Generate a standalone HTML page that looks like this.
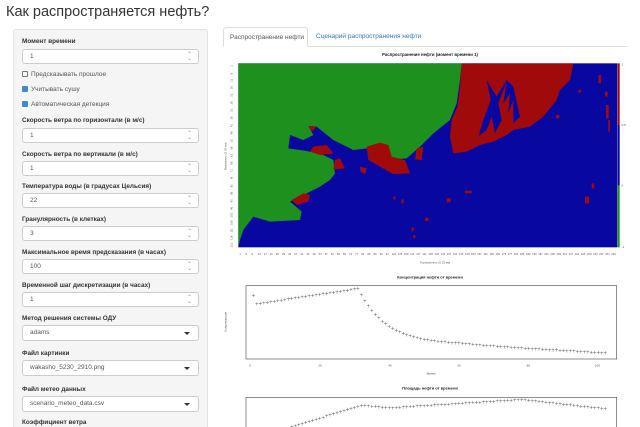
<!DOCTYPE html>
<html><head><meta charset="utf-8">
<style>
*{box-sizing:border-box;margin:0;padding:0}
html,body{width:640px;height:427px;overflow:hidden}
body{background:#fff;font-family:"Liberation Sans",sans-serif;color:#333;position:relative}
h1{position:absolute;left:6px;top:4px;font-size:14.5px;font-weight:normal;color:#333;white-space:nowrap}
.side{position:absolute;left:13px;top:29px;width:195px;height:398px;background:#f5f5f5;border:1px solid #e3e3e3;border-bottom:none;border-radius:3px 3px 0 0}
.lb{position:absolute;left:22px;font-size:6.4px;font-weight:bold;color:#333;white-space:nowrap}
.in{position:absolute;left:22px;width:177px;height:15px;background:#fff;border:1px solid #ccc;border-radius:3px;font-size:6.5px;color:#555;padding:3px 7px}
.in .sp{position:absolute;right:6px;top:3px;font-size:6px;color:#999;line-height:4px}
.in .ar{position:absolute;right:8px;top:6px;width:0;height:0;border-left:3px solid transparent;border-right:3px solid transparent;border-top:3px solid #333}
.cb{position:absolute;left:22px;font-size:6.5px;color:#555;white-space:nowrap}
.cb i{display:inline-block;width:6px;height:6px;border:1px solid #777;vertical-align:-1px;margin-right:3px;border-radius:1px}
.cb i.on{background:#3c8dcf;border-color:#3c8dcf}
.tab1{position:absolute;left:223px;top:27px;width:85px;height:20px;border:1px solid #ddd;border-bottom-color:#fff;border-radius:3px 3px 0 0;font-size:6.5px;padding:6px 6px;background:#fff;color:#555;white-space:nowrap}
.tab2{position:absolute;left:316px;top:33px;font-size:6.5px;color:#337ab7;white-space:nowrap}
.tl{position:absolute;left:307px;top:46px;width:320px;border-top:1px solid #ddd}
svg{position:absolute;overflow:hidden}
</style></head><body>
<h1>Как распространяется нефть?</h1>
<div class="side"></div>
<div class="lb" style="top:38px">Момент времени</div>
<div class="in" style="top:49px">1<span class="sp">⌃<br>⌄</span></div>
<div class="cb" style="top:71px"><i></i>Предсказывать прошлое</div>
<div class="cb" style="top:86px"><i class="on"></i>Учитывать сушу</div>
<div class="cb" style="top:101px"><i class="on"></i>Автоматическая детекция</div>
<div class="lb" style="top:117px">Скорость ветра по горизонтали (в м/с)</div>
<div class="in" style="top:128px">1<span class="sp">⌃<br>⌄</span></div>
<div class="lb" style="top:151px">Скорость ветра по вертикали (в м/с)</div>
<div class="in" style="top:161px">1<span class="sp">⌃<br>⌄</span></div>
<div class="lb" style="top:183px">Температура воды (в градусах Цельсия)</div>
<div class="in" style="top:193px">22<span class="sp">⌃<br>⌄</span></div>
<div class="lb" style="top:216px">Гранулярность (в клетках)</div>
<div class="in" style="top:226px">3<span class="sp">⌃<br>⌄</span></div>
<div class="lb" style="top:249px">Максимальное время предсказания (в часах)</div>
<div class="in" style="top:259px">100<span class="sp">⌃<br>⌄</span></div>
<div class="lb" style="top:282px">Временной шаг дискретизации (в часах)</div>
<div class="in" style="top:292px">1<span class="sp">⌃<br>⌄</span></div>
<div class="lb" style="top:315px">Метод решения системы ОДУ</div>
<div class="in" style="top:325px;height:16px">adams<span class="ar"></span></div>
<div class="lb" style="top:350px">Файл картинки</div>
<div class="in" style="top:360px;height:16px">wakasho_5230_2910.png<span class="ar"></span></div>
<div class="lb" style="top:386px">Файл метео данных</div>
<div class="in" style="top:396px;height:16px">scenario_meteo_data.csv<span class="ar"></span></div>
<div class="lb" style="top:419px">Коэффициент ветра</div>

<div class="tl"></div>
<div class="tab1">Распространение нефти</div>
<div class="tab2">Сценарий распространения нефти</div>

<svg style="left:220px;top:20px" width="420" height="250" viewBox="0 0 1260 750">
<text x="630" y="108" font-size="13" text-anchor="middle" font-weight="bold" fill="#222" font-family="Liberation Sans">Распространение нефти (момент времени 1)</text>
<rect x="55" y="130" width="1137" height="552" fill="#0808a0"/>
<polygon fill="#1e901e" points="55,130 725,130 720,180 710,250 690,300 640,340 600,380 560,415 520,418 480,400 440,385 400,390 340,360 290,320 265,318 280,345 250,360 210,345 205,385 240,390 300,400 340,420 345,460 330,480 300,500 260,520 210,545 245,575 240,600 150,605 100,590 70,630 60,660 55,680"/>
<polygon fill="#a00a0a" points="725,130 1060,130 1050,180 1020,210 1010,240 970,290 930,320 880,330 860,345 820,365 780,375 740,395 700,400 690,350 695,300 712,260 720,200"/>
<polygon fill="#0808a0" points="800,180 812,240 790,300 775,350 800,330 815,290 825,340 845,300 835,250 860,185 850,250 870,220 865,280 880,240 880,310 900,290 880,200 860,180 830,230"/>
<polygon fill="#a00a0a" points="440,380 480,368 505,375 515,410 555,420 570,460 520,462 480,440 445,420"/>
<polygon fill="#a00a0a" points="345,420 360,415 375,445 340,448"/>
<polygon fill="#a00a0a" points="280,380 320,375 340,400 300,405 270,395"/>
<polygon fill="#a00a0a" points="590,385 610,380 605,420 585,418"/>
<polygon fill="#a00a0a" points="215,540 250,520 270,525 265,545 230,555"/>
<polygon fill="#a00a0a" points="265,318 290,320 275,335"/>
<polygon fill="#a00a0a" points="420,440 440,445 435,462 422,455"/>
<g fill="#a00a0a"><rect x="1135" y="165" width="8" height="25"/><rect x="1155" y="215" width="8" height="15"/><rect x="1158" y="255" width="8" height="40"/><rect x="1165" y="300" width="5" height="35"/><rect x="1075" y="210" width="8" height="8"/><rect x="1115" y="490" width="8" height="15"/><rect x="1095" y="530" width="12" height="20"/><rect x="735" y="512" width="20" height="8"/><rect x="680" y="535" width="12" height="12"/><rect x="545" y="538" width="6" height="12"/><rect x="520" y="530" width="6" height="8"/><rect x="615" y="593" width="10" height="10"/><rect x="575" y="622" width="6" height="12"/><rect x="580" y="645" width="6" height="10"/><rect x="1008" y="285" width="10" height="10"/></g>
<rect x="1193" y="130" width="6" height="185" fill="#a00a0a"/><rect x="1193" y="315" width="6" height="182" fill="#0808a0"/><rect x="1193" y="497" width="6" height="185" fill="#1e901e"/>
<g font-size="9" fill="#555" font-family="Liberation Sans"><text x="1205" y="136">1</text><text x="1205" y="318">0.5</text><text x="1205" y="500">0</text><text x="1205" y="684">-1</text>
<text x="600" y="730">Горизонталь (5.23 км)</text>
<text x="20" y="450" transform="rotate(-90 20 450)">Вертикаль (2.91 км)</text></g>
<g id="xt" font-size="8" fill="#555" font-family="Liberation Sans"></g>
<g id="yt" font-size="8" fill="#555" font-family="Liberation Sans"></g>
</svg>

<svg style="left:220px;top:265px" width="420" height="162" viewBox="0 0 1260 486">
<text x="630" y="40" font-size="12" text-anchor="middle" font-weight="bold" fill="#222" font-family="Liberation Sans">Концентрация нефти от времени</text>
<rect x="78" y="62" width="1112" height="220" fill="none" stroke="#555" stroke-width="2"/>
<g font-size="9" fill="#555" font-family="Liberation Sans"><text x="88" y="305">0</text><text x="295" y="305">20</text><text x="505" y="305">40</text><text x="712" y="305">60</text><text x="920" y="305">80</text><text x="1125" y="305">100</text><text x="620" y="328">Время</text>
<text x="20" y="200" transform="rotate(-90 20 200)">Концентрация</text></g>
<text x="630" y="374" font-size="12" text-anchor="middle" font-weight="bold" fill="#222" font-family="Liberation Sans">Площадь нефти от времени</text>
<rect x="78" y="397" width="1112" height="120" fill="none" stroke="#555" stroke-width="2"/>
<g id="p1" fill="#666"></g>
</svg>
<script>
var ns="http://www.w3.org/2000/svg",g=document.getElementById('p1');
function pt(x,y){var t=document.createElementNS(ns,'text');t.setAttribute('x',x-5);t.setAttribute('y',y+5);t.setAttribute('font-size','18');t.textContent='+';g.appendChild(t);}
for(var t=1;t<=102;t++){var x=100+(t-1)*10.45,y;
 if(t==1)y=92;else if(t<=31)y=118-(t-2)*46/29;else y=240-(240-72)*Math.exp(-(t-31)/8)+ (t>60?(t-60)*0.6:0);
 pt(x,y);
 if(t>=12){var y2; if(t<=32)y2=487-(t-12)*65/20; else if(t<=40)y2=422+(t-32); else if(t<=78)y2=430-(t-40)*25/38; else y2=405+(t-78)*28/24; pt(x,y2);}
}
var xt=document.getElementById('xt');
for(var i=0;i<62;i++){var e=document.createElementNS(ns,'text');e.setAttribute('x',58+i*18.3);e.setAttribute('y',705);e.textContent=1+i*4;xt.appendChild(e);}
var yt=document.getElementById('yt');
for(var i=0;i<25;i++){var e=document.createElementNS(ns,'text');e.setAttribute('x',38);e.setAttribute('y',140+i*22.6);e.setAttribute('transform','rotate(-90 38 '+(140+i*22.6)+')');e.textContent=1+i*5;yt.appendChild(e);}
</script>
</body></html>
